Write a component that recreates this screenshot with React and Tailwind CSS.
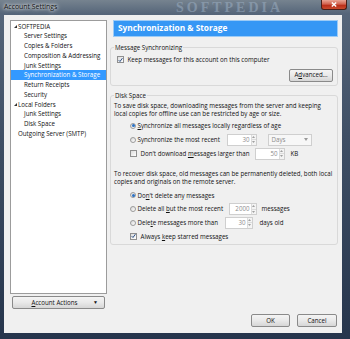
import React from 'react';

const FONT = { fontFamily: '"Open Sans", "Noto Sans", sans-serif' };

const tree = [
  { label: 'SOFTPEDIA', level: 0, open: true },
  { label: 'Server Settings', level: 1 },
  { label: 'Copies & Folders', level: 1 },
  { label: 'Composition & Addressing', level: 1 },
  { label: 'Junk Settings', level: 1 },
  { label: 'Synchronization & Storage', level: 1, selected: true },
  { label: 'Return Receipts', level: 1 },
  { label: 'Security', level: 1 },
  { label: 'Local Folders', level: 0, open: true },
  { label: 'Junk Settings', level: 1 },
  { label: 'Disk Space', level: 1 },
  { label: 'Outgoing Server (SMTP)', level: 0 },
];

function Checkbox({ checked }) {
  return (
    <span className="w-[7px] h-[7px] shrink-0 border border-[#8f8f8f] bg-gradient-to-br from-[#dcdcdc] to-white flex items-center justify-center">
      {checked && (
        <svg width="6" height="6" viewBox="0 0 6 6">
          <path d="M0.8 3.2 L2.4 4.8 L5.3 0.8" fill="none" stroke="#2b4f86" strokeWidth="1.2" />
        </svg>
      )}
    </span>
  );
}

function Radio({ checked }) {
  return (
    <span className="w-[6px] h-[6px] shrink-0 rounded-full border border-[#9a9a9a] bg-gradient-to-br from-[#d8d8d8] to-white flex items-center justify-center">
      {checked && <span className="w-[3px] h-[3px] rounded-full bg-[#2a72c6]" />}
    </span>
  );
}

function Spinner({ value, width }) {
  return (
    <div className={`${width} h-[12px] shrink-0 border border-[#cfcfcf] bg-white flex`}>
      <span className="flex-1 text-right pr-[1px] leading-[10px] text-[#8c8c8c]">{value}</span>
      <div className="w-[5px] border-l border-[#dcdcdc] flex flex-col bg-[#f4f4f4]">
        <div className="flex-1 flex items-center justify-center border-b border-[#dcdcdc]">
          <svg width="3" height="2" viewBox="0 0 3 2"><path d="M0 2 L1.5 0 L3 2Z" fill="#a0a0a0" /></svg>
        </div>
        <div className="flex-1 flex items-center justify-center">
          <svg width="3" height="2" viewBox="0 0 3 2"><path d="M0 0 L1.5 2 L3 0Z" fill="#a0a0a0" /></svg>
        </div>
      </div>
    </div>
  );
}

function Button({ children, className = '' }) {
  return (
    <div
      className={`h-[13px] flex items-center justify-center rounded-[2px] border border-[#8a8a8a] bg-gradient-to-b from-[#f4f4f4] via-[#e9e9e9] to-[#d6d6d6] text-[#111] ${className}`}
    >
      {children}
    </div>
  );
}

export default function App() {
  return (
    <div
      className="w-[350px] h-[339px] overflow-hidden bg-[linear-gradient(180deg,#76838f_0%,#56667a_4%,#3f4f65_40%,#26354c_100%)] flex flex-col text-[6.2px] text-[#111]"
      style={FONT}
    >
      {/* title bar */}
      <div className="relative h-[15px] flex items-start shrink-0">
        <span className="pl-[4px] pt-[2px] leading-[10px] text-[6.9px] text-[#111] [text-shadow:0_0_3px_#fff,0_0_5px_#fff]">
          Account Settings
        </span>
        <span
          className="absolute left-[176px] top-0 text-[14px] font-bold tracking-[3px] text-[#9fb2c6] opacity-50 leading-[15px]"
          style={{ fontFamily: '"Liberation Serif", serif' }}
        >
          SOFTPEDIA
        </span>
        <div className="ml-auto mr-[3px] w-[26px] h-[10px] rounded-b-[3px] border border-t-0 border-[#4a1d16] bg-[linear-gradient(180deg,#eaa595_0%,#d3634f_45%,#bb2f1a_60%,#c94a2d_100%)] flex items-center justify-center">
          <svg width="6" height="5" viewBox="0 0 6 5">
            <path d="M0.8 0.5 L5.2 4.5 M5.2 0.5 L0.8 4.5" stroke="#fff" strokeWidth="1.4" />
          </svg>
        </div>
      </div>

      {/* client area */}
      <div className="ml-[4px] w-[338px] h-[318px] bg-[#f0f0f0] flex flex-col">
        <div className="flex pt-[5px] pl-[6px]">
          {/* left column */}
          <div className="w-[97px] flex flex-col">
            <div className="h-[274px] bg-white border border-[#9c9c9c] pt-[0.5px]">
              {tree.map((item, i) => (
                <div
                  key={i}
                  className={`h-[9.75px] leading-[9.75px] flex items-center whitespace-nowrap ${
                    item.selected ? 'bg-[#3399ff] text-white' : ''
                  } ${item.level === 0 ? 'pl-[3px]' : 'pl-[9px]'}`}
                >
                  <span className="w-[4px] flex items-center">
                    {item.open && (
                      <svg width="3" height="3" viewBox="0 0 3 3">
                        <path d="M3 0 L3 3 L0 3Z" fill="#333" />
                      </svg>
                    )}
                  </span>
                  <span>{item.label}</span>
                </div>
              ))}
            </div>
            <Button className="mt-[2px] mx-[2px] relative">
              <span className="ml-[-8px]">
                <u>A</u>ccount Actions
              </span>
              <span className="absolute right-[6px] text-[5px]">▼</span>
            </Button>
          </div>

          {/* right column */}
          <div className="ml-[3px] w-[228px] flex flex-col">
            <div className="ml-[3px] h-[17px] bg-[#3597f5] border border-[#9ccbf6] flex items-center pl-[4px]">
              <span className="text-white font-bold text-[8.3px]">Synchronization &amp; Storage</span>
            </div>

            <fieldset className="mt-[6px] border border-[#d9d9d9] rounded-[3px]">
              <legend className="ml-[3px] px-[1px] leading-[9px]">Message Synchronizing</legend>
              <div className="pl-[6px] pr-[4px] pt-[3px] pb-[3px] flex flex-col">
                <div className="h-[9px] flex items-center gap-[3.5px]">
                  <Checkbox checked />
                  <span>Keep messages for this account on this computer</span>
                </div>
                <div className="flex justify-end mt-[4.5px]">
                  <Button className="w-[44px]">
                    A<u>d</u>vanced...
                  </Button>
                </div>
              </div>
            </fieldset>

            <fieldset className="mt-[5px] border border-[#d9d9d9] rounded-[3px]">
              <legend className="ml-[3px] px-[1px] leading-[9px]">Disk Space</legend>
              <div className="pl-[3px] pb-[1px] flex flex-col whitespace-nowrap">
                <p className="mt-[2px] leading-[8px]">
                  To save disk space, downloading messages from the server and keeping
                  <br />
                  local copies for offline use can be restricted by age or size.
                </p>
                <div className="mt-[1px] ml-[16px] flex flex-col">
                  <div className="h-[14px] flex items-center">
                    <Radio checked />
                    <span className="ml-[1.5px]">
                      <u>S</u>ynchronize all messages locally regardless of age
                    </span>
                  </div>
                  <div className="h-[14px] flex items-center">
                    <Radio />
                    <span className="ml-[1.5px] w-[89px]">Synchronize the most recent</span>
                    <Spinner value="30" width="w-[30px]" />
                    <div className="ml-[11px] w-[44px] h-[12px] border border-[#cfcfcf] bg-[#f7f7f7] flex items-center pl-[3px] text-[#8c8c8c]">
                      <span className="flex-1">Days</span>
                      <svg width="4" height="3" viewBox="0 0 4 3" className="mr-[3px]">
                        <path d="M0 0 L2 3 L4 0Z" fill="#9a9a9a" />
                      </svg>
                    </div>
                  </div>
                  <div className="h-[14px] flex items-center">
                    <Checkbox />
                    <span className="ml-[3.5px] w-[114px]">
                      Don't download <u>m</u>essages larger than
                    </span>
                    <Spinner value="50" width="w-[30px]" />
                    <span className="ml-[6px]">KB</span>
                  </div>
                </div>
                <p className="mt-[9px] leading-[8px]">
                  To recover disk space, old messages can be permanently deleted, both local
                  <br />
                  copies and originals on the remote server.
                </p>
                <div className="mt-[3px] ml-[16px] flex flex-col">
                  <div className="h-[13.7px] flex items-center">
                    <Radio checked />
                    <span className="ml-[1.5px]">
                      Do<u>n</u>'t delete any messages
                    </span>
                  </div>
                  <div className="h-[13.7px] flex items-center">
                    <Radio />
                    <span className="ml-[1.5px] w-[91px]">
                      Delete all <u>b</u>ut the most recent
                    </span>
                    <Spinner value="2000" width="w-[28px]" />
                    <span className="ml-[5px]">messages</span>
                  </div>
                  <div className="h-[13.7px] flex items-center">
                    <Radio />
                    <span className="ml-[1.5px] w-[87px]">
                      Dele<u>t</u>e messages more than
                    </span>
                    <Spinner value="30" width="w-[28px]" />
                    <span className="ml-[7px]">days old</span>
                  </div>
                  <div className="h-[13.7px] flex items-center">
                    <Checkbox checked />
                    <span className="ml-[3.5px]">
                      Always <u>k</u>eep starred messages
                    </span>
                  </div>
                </div>
              </div>
            </fieldset>
          </div>
        </div>

        {/* dialog buttons */}
        <div className="mt-[5px] pr-[5px] flex justify-end gap-[7px]">
          <Button className="w-[39px] border-[#3c7fb1] from-[#eaf6fd] via-[#d9f0fc] to-[#bee6fd]">OK</Button>
          <Button className="w-[40px]">Cancel</Button>
        </div>
      </div>
    </div>
  );
}
